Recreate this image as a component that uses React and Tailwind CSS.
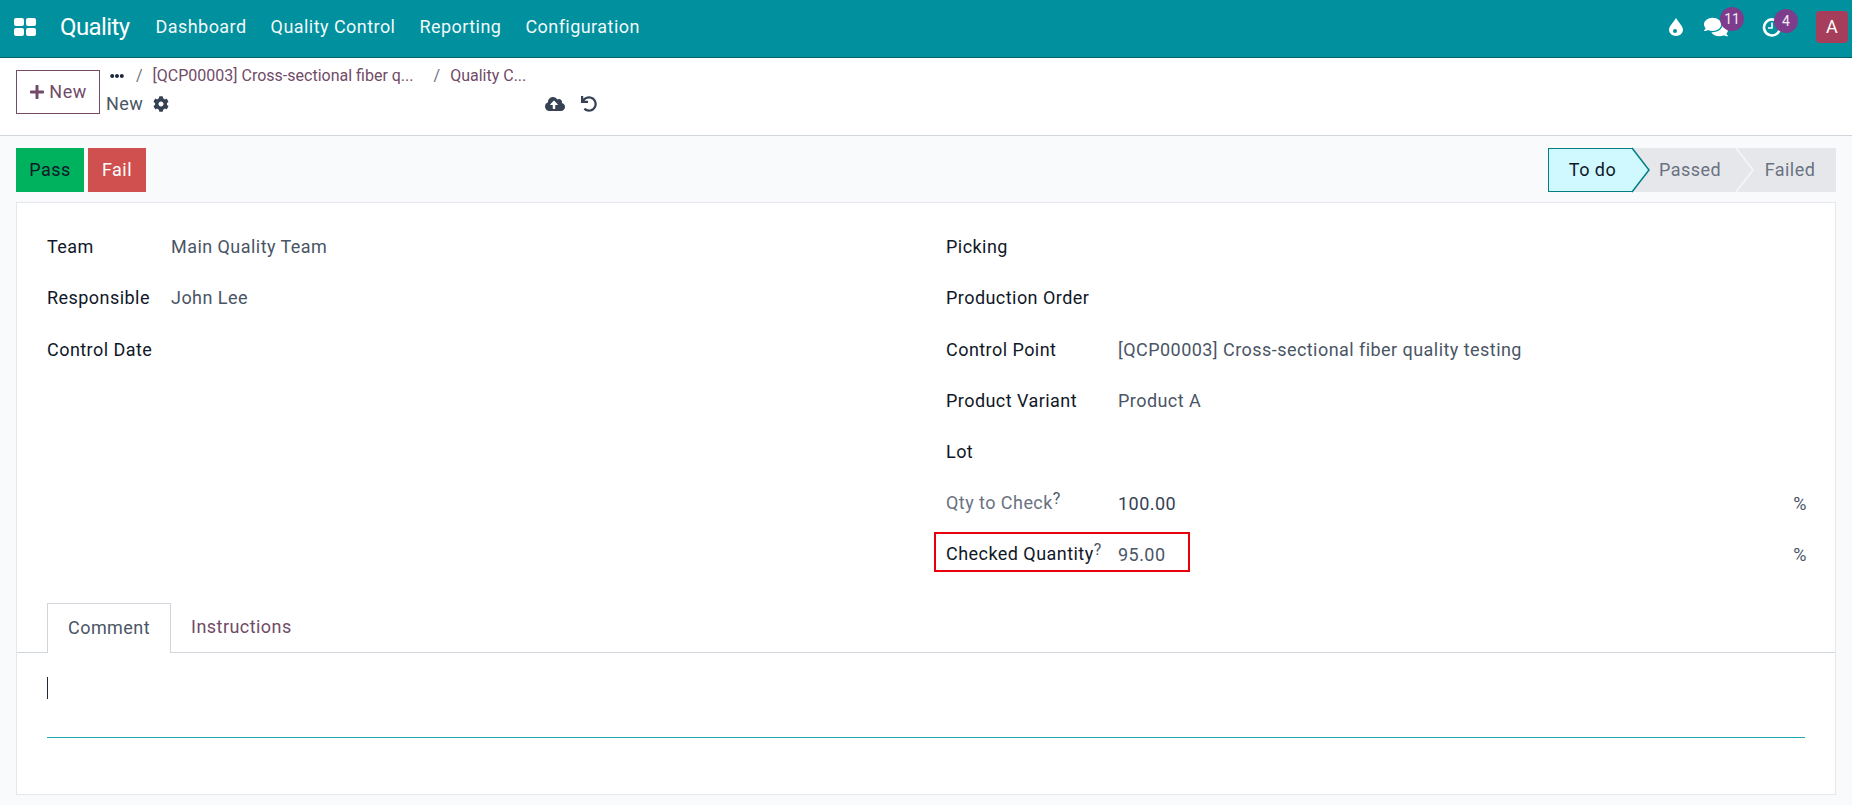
import React from 'react';
import { FaPlus, FaEllipsisH, FaCog, FaCloudUploadAlt, FaUndo, FaComments } from 'react-icons/fa';

const navLinks = ['Dashboard', 'Quality Control', 'Reporting', 'Configuration'];

const leftFields = [
  { label: 'Team', value: 'Main Quality Team' },
  { label: 'Responsible', value: 'John Lee' },
  { label: 'Control Date', value: '' },
];

const AppsIcon = () => (
  <svg viewBox="0 0 22 18" className="h-4.5 w-5.5 fill-current">
    <rect x="0" y="0" width="10" height="8" rx="2" />
    <rect x="12" y="0" width="10" height="8" rx="2" />
    <rect x="0" y="10" width="10" height="8" rx="2" />
    <rect x="12" y="10" width="10" height="8" rx="2" />
  </svg>
);

const DropIcon = () => (
  <svg viewBox="0 0 16 18" className="h-4.5 w-4 fill-current">
    <path d="M8 0C11 5 15 8 15 12A7 6 0 0 1 1 12C1 8 5 5 8 0Z" />
    <circle cx="7" cy="13" r="2" fill="#00909e" />
  </svg>
);

// Activity clock: open ring with hands, the badge sits on the gap
const ActivityIcon = () => (
  <svg viewBox="0 0 20 20" className="h-5 w-5 fill-none stroke-current">
    <path d="M17 6.5A8 8 0 1 0 18 11" strokeWidth="2.6" />
    <path d="M10 5.5V11H6" strokeWidth="1.6" />
  </svg>
);

const Badge = ({ children }) => (
  <span className="absolute -top-2 -right-4 flex h-6 min-w-6 items-center justify-center rounded-full bg-[#7d3c8c] px-1 text-sm tracking-normal text-white/90">
    {children}
  </span>
);

const Field = ({ label, value, muted, help, unit, boxed }) => (
  <div className="flex items-center">
    <div className="relative flex grow items-center">
      {boxed && <div className="absolute -top-2 -left-3 h-10 w-64 border-2 border-red-600" />}
      <div className={`flex w-43 ${muted ? 'text-gray-500' : 'text-gray-900'}`}>
        {label}
        {help && <sup className="mt-1.5 text-base tracking-normal text-gray-600">?</sup>}
      </div>
      <div className={muted ? 'text-gray-700' : 'text-gray-600'}>{value}</div>
    </div>
    {unit && <span className="-mr-0.5 text-gray-600">{unit}</span>}
  </div>
);

const App = () => {
  return (
    <div className="flex h-screen flex-col bg-gray-50 text-lg tracking-wide text-gray-600" style={{ fontFamily: 'Roboto, sans-serif' }}>
      <header className="flex h-14.5 shrink-0 items-center border-b border-[#00626b] bg-[#00909e] pr-1 pb-1 pl-3.5 text-white">
        <AppsIcon />
        <span className="mr-6.5 ml-6 text-2xl tracking-tight">Quality</span>
        <nav className="flex gap-6">
          {navLinks.map((link) => (
            <a key={link} className="opacity-95">{link}</a>
          ))}
        </nav>
        <div className="ml-auto flex items-center">
          <DropIcon />
          <div className="relative mr-8.5 ml-5">
            <FaComments className="text-2xl" />
            <Badge>11</Badge>
          </div>
          <div className="relative mr-8.5">
            <ActivityIcon />
            <Badge>4</Badge>
          </div>
          <div className="flex h-8 w-8 items-center justify-center rounded-sm bg-[#a63d5a]">A</div>
        </div>
      </header>

      <section className="flex h-19.5 shrink-0 items-start border-b border-gray-300 bg-white px-4 pt-1">
        <button className="mt-2 flex h-11 w-21 items-center justify-center gap-1 border border-[#714b67] text-[#714b67]">
          <FaPlus className="text-base" />
          New
        </button>
        <div className="ml-1.5 flex flex-col">
          <div className="flex h-7 items-center whitespace-nowrap text-base tracking-normal">
            <FaEllipsisH className="ml-1 text-sm text-gray-800" />
            <span className="ml-3 text-gray-500">/</span>
            <a className="ml-2.5 text-[#714b67]">[QCP00003] Cross-sectional fiber q...</a>
            <span className="ml-5 text-gray-500">/</span>
            <a className="ml-2.5 text-[#714b67]">Quality C...</a>
          </div>
          <div className="flex items-center">
            <span>New</span>
            <FaCog className="ml-2.5 text-base text-gray-700" />
            <FaCloudUploadAlt className="ml-94 text-xl text-gray-700" />
            <FaUndo className="ml-4 text-base text-gray-700" />
          </div>
        </div>
      </section>

      <main className="flex grow flex-col px-4 pb-2.5">
        <div className="flex h-16.5 shrink-0 items-start justify-between pt-3">
          <div className="flex gap-1">
            <button className="h-11 w-17 bg-[#00b15d] text-gray-900">Pass</button>
            <button className="h-11 w-14.5 bg-[#d0504f] text-white">Fail</button>
          </div>
          <div className="flex h-11 items-stretch">
            <div className="relative flex w-21 items-center justify-center border border-r-0 border-[#017e84] bg-[#cff9fe] pl-1 text-gray-900">
              To do
              <svg viewBox="0 0 18 44" preserveAspectRatio="none" className="absolute -top-px left-full z-10 h-11 w-4.5 overflow-visible">
                <path d="M0 0 L17 22 L0 44 Z" fill="#cff9fe" />
                <path d="M0 0 L17 22 L0 44" fill="none" stroke="#017e84" strokeWidth="1.5" />
              </svg>
            </div>
            <div className="flex w-26 items-center justify-center bg-gray-200 pl-3 text-gray-500">Passed</div>
            <div className="relative flex w-25 items-center justify-center bg-gray-200 pl-2 text-gray-500">
              <svg viewBox="0 0 18 44" preserveAspectRatio="none" className="absolute top-0 left-0 h-11 w-4.5">
                <path d="M0 0 L17 22 L0 44" fill="none" stroke="#f3f4f6" strokeWidth="2" />
              </svg>
              Failed
            </div>
          </div>
        </div>

        <div className="flex grow flex-col border border-gray-200 bg-white">
          <div className="grid grid-cols-2 gap-10 px-7.5 pt-4.5">
            <div className="grid h-90 grid-rows-7">
              {leftFields.map((f) => (
                <div key={f.label} className="flex items-center">
                  <div className="w-31 text-gray-900">{f.label}</div>
                  <div>{f.value}</div>
                </div>
              ))}
            </div>
            <div className="grid h-90 grid-rows-7">
              <Field label="Picking" />
              <Field label="Production Order" />
              <Field label="Control Point" value="[QCP00003] Cross-sectional fiber quality testing" />
              <Field label="Product Variant" value="Product A" />
              <Field label="Lot" />
              <Field label="Qty to Check" value="100.00" muted help unit="%" />
              <Field label="Checked Quantity" value="95.00" help unit="%" boxed />
            </div>
          </div>

          <div className="mt-5.5 flex h-12.5 shrink-0 border-b border-gray-300 pl-7.5">
            <div className="-mb-px border border-b-0 border-gray-300 bg-white px-5 pt-2.5">Comment</div>
            <div className="px-5 pt-2.5 text-[#714b67]">Instructions</div>
          </div>

          <div className="px-7.5 pt-6">
            <div className="h-5.5 w-px bg-gray-800" />
            <div className="mt-9.5 border-b border-[#20a8b0]" />
          </div>
        </div>
      </main>
    </div>
  );
};

export default App;
